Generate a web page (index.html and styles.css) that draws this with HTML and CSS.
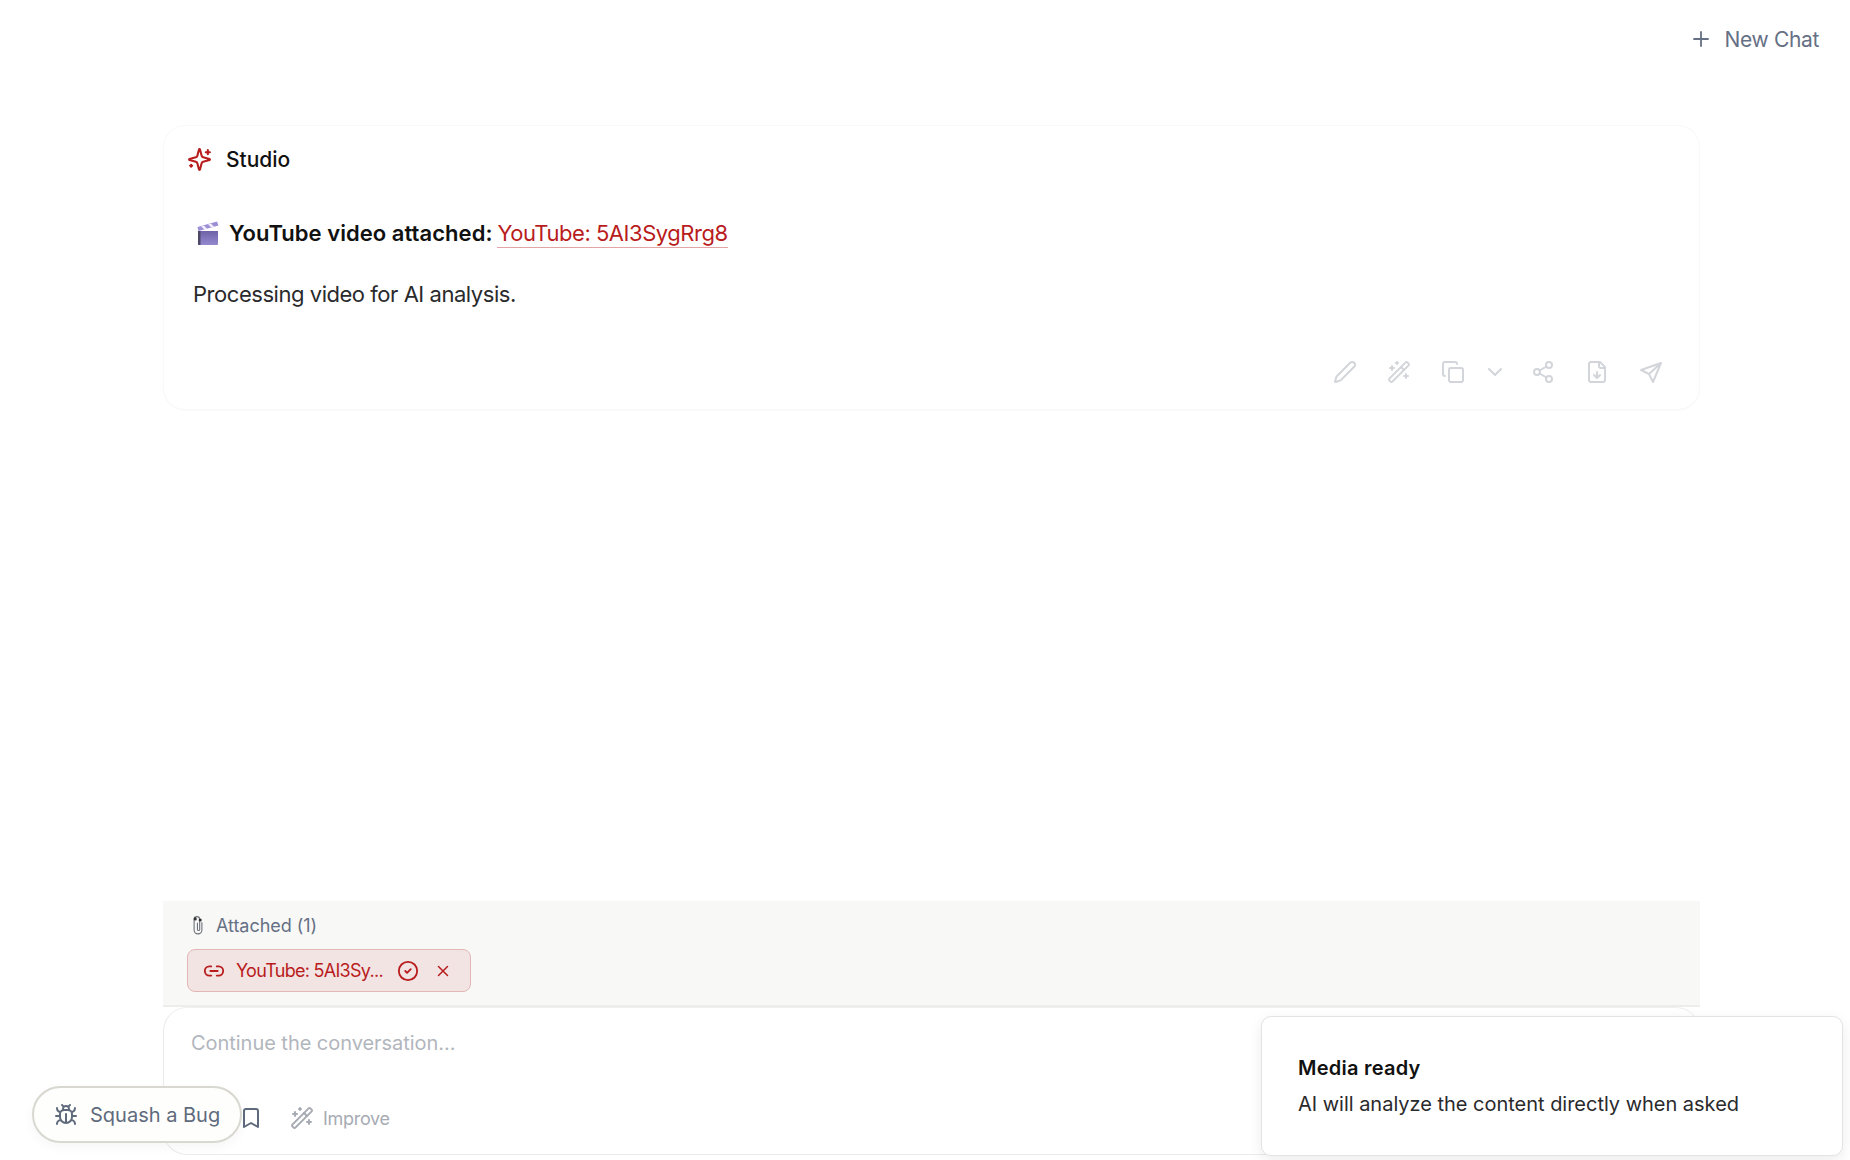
FILE: index.html
```html
<!DOCTYPE html>
<html lang="en">
<head>
<meta charset="utf-8">
<title>Studio</title>
<link rel="stylesheet" href="styles.css">
</head>
<body>
<div class="app">
  <header class="top">
    <button class="new-chat">
      <svg class="ic ic-plus" viewBox="0 0 24 24"><path d="M5 12h14M12 5v14"/></svg>
      <span>New Chat</span>
    </button>
  </header>

  <main class="thread">
    <article class="card">
      <div class="who">
        <svg class="ic ic-spark" viewBox="0 0 24 24"><path d="M9.937 15.5A2 2 0 0 0 8.5 14.063l-6.135-1.582a.5.5 0 0 1 0-.962L8.5 9.936A2 2 0 0 0 9.937 8.5l1.582-6.135a.5.5 0 0 1 .963 0L14.063 8.5A2 2 0 0 0 15.5 9.937l6.135 1.581a.5.5 0 0 1 0 .964L15.5 14.063a2 2 0 0 0-1.437 1.437l-1.582 6.135a.5.5 0 0 1-.963 0z"/><path d="M20 3v4M22 5h-4M4 17v2M5 18H3"/></svg>
        <span class="who-name">Studio</span>
      </div>
      <p class="lead">
        <svg class="clapper" viewBox="0 0 22 24">
          <defs><linearGradient id="clapBody" x1="0" y1="0" x2="0" y2="1"><stop offset="0" stop-color="#6f63a8"/><stop offset="1" stop-color="#9488cf"/></linearGradient></defs>
          <path fill="url(#clapBody)" d="M1 10h20v13a1 1 0 0 1-1 1H2a1 1 0 0 1-1-1z"/>
          <path fill="#4c4866" d="M1 10h2.500v14H2a1 1 0 0 1-1-1z"/>
          <path fill="#9d8fd6" d="M.5 6 20 .5l1.500 4L1.500 10z"/>
          <path fill="#f1edfb" d="m4 5.200 3.200 3.400 3-.7-3.200-3.500zm7-2 3.200 3.400 3-.7L14 2.400z"/>
        </svg>
        <strong>YouTube video attached:</strong><a class="link" href="#">YouTube: 5AI3SygRrg8</a>
      </p>
      <p class="body-text">Processing video for AI analysis.</p>
      <div class="actions">
        <svg class="ic act" viewBox="0 0 24 24"><path d="M21.174 6.812a1 1 0 0 0-3.986-3.987L3.842 16.174a2 2 0 0 0-.5.83l-1.321 4.352a.5.5 0 0 0 .623.622l4.353-1.32a2 2 0 0 0 .83-.497z"/></svg>
        <svg class="ic act" viewBox="0 0 24 24"><path d="m21.640 3.640-1.280-1.280a1.210 1.210 0 0 0-1.720 0L2.360 18.640a1.210 1.210 0 0 0 0 1.720l1.280 1.280a1.200 1.200 0 0 0 1.720 0L21.640 5.360a1.200 1.200 0 0 0 0-1.720"/><path d="m14 7 3 3M5 6v4M19 14v4M10 2v2M7 8H3M21 16h-4M11 3H9"/></svg>
        <svg class="ic act" viewBox="0 0 24 24"><rect x="8" y="8" width="14" height="14" rx="2"/><path d="M4 16c-1.100 0-2-.9-2-2V4c0-1.100.9-2 2-2h10c1.100 0 2 .9 2 2"/></svg>
        <svg class="ic act-chev" viewBox="0 0 24 24"><path d="m6 9 6 6 6-6"/></svg>
        <svg class="ic act" viewBox="0 0 24 24"><circle cx="18" cy="5" r="3"/><circle cx="6" cy="12" r="3"/><circle cx="18" cy="19" r="3"/><path d="m8.590 13.510 6.830 3.980M15.410 6.510l-6.820 3.980"/></svg>
        <svg class="ic act" viewBox="0 0 24 24"><path d="M15 2H6a2 2 0 0 0-2 2v16a2 2 0 0 0 2 2h12a2 2 0 0 0 2-2V7Z"/><path d="M14 2v4a2 2 0 0 0 2 2h4M12 18v-6M9 15l3 3 3-3"/></svg>
        <svg class="ic act" viewBox="0 0 24 24"><path d="M22 3 2 10l8 4 4 8zM22 3 10 14"/></svg>
      </div>
    </article>
  </main>

  <section class="composer">
    <div class="attached">
      <div class="attached-label">
        <svg class="clip" viewBox="0 0 12 18"><path d="M9.500 6.500v7a3.500 3.500 0 0 1-7 0V4a2.500 2.500 0 0 1 5 0v9a1 1 0 0 1-2 0V7"/><circle class="clip-eye" cx="3.500" cy="3.500" r="1.400"/><circle class="clip-eye" cx="8" cy="4.500" r="1.400"/></svg>
        <span>Attached (1)</span>
      </div>
      <div class="chip">
        <svg class="ic chip-link" viewBox="0 0 24 24"><path d="M9 17H7A5 5 0 0 1 7 7h2M15 7h2a5 5 0 1 1 0 10h-2M8 12h8"/></svg>
        <span class="chip-name">YouTube: 5AI3Sy...</span>
        <svg class="ic chip-check" viewBox="0 0 24 24"><circle cx="12" cy="12" r="10"/><path d="m9 12 2 2 4-4"/></svg>
        <svg class="ic chip-x" viewBox="0 0 24 24"><path d="M18 6 6 18M6 6l12 12"/></svg>
      </div>
    </div>
    <div class="input-card">
      <div class="placeholder">Continue the conversation...</div>
      <div class="tools">
        <svg class="ic tool-mark" viewBox="0 0 24 24"><path d="m19 21-7-4-7 4V5a2 2 0 0 1 2-2h10a2 2 0 0 1 2 2v16z"/></svg>
        <svg class="ic tool-wand" viewBox="0 0 24 24"><path d="m21.640 3.640-1.280-1.280a1.210 1.210 0 0 0-1.720 0L2.360 18.640a1.210 1.210 0 0 0 0 1.720l1.280 1.280a1.200 1.200 0 0 0 1.720 0L21.640 5.360a1.200 1.200 0 0 0 0-1.720"/><path d="m14 7 3 3M5 6v4M19 14v4M10 2v2M7 8H3M21 16h-4M11 3H9"/></svg>
        <span class="tool-label">Improve</span>
      </div>
    </div>
  </section>

  <button class="bug">
    <svg class="ic bug-ic" viewBox="0 0 24 24"><path d="m8 2 1.880 1.880M14.120 3.880 16 2M9 7.130v-1a3.003 3.003 0 1 1 6 0v1"/><path d="M12 20c-3.300 0-6-2.700-6-6v-3a4 4 0 0 1 4-4h4a4 4 0 0 1 4 4v3c0 3.300-2.700 6-6 6M12 20v-9M6.530 9C4.600 8.800 3 7.100 3 5M6 13H2M3 21c0-2.100 1.700-3.900 3.800-4M20.970 5c0 2.100-1.600 3.800-3.500 4M22 13h-4M17.200 17c2.100.1 3.800 1.900 3.800 4"/></svg>
    <span>Squash a Bug</span>
  </button>

  <aside class="toast">
    <div class="toast-title">Media ready</div>
    <div class="toast-text">AI will analyze the content directly when asked</div>
  </aside>
</div>
</body>
</html>
```

FILE: styles.css
```css
* { box-sizing: border-box; }
html, body { margin: 0; padding: 0; background: #fff; }
body { font-family: Inter, "Noto Sans", sans-serif; color: #1c1c1e; }
p { margin: 0; }
button { font: inherit; background: none; border: 0; padding: 0; }

.app { position: relative; width: 1850px; height: 1160px; overflow: hidden; display: flex; flex-direction: column; }
.ic { fill: none; stroke: currentColor; stroke-width: 2; stroke-linecap: round; stroke-linejoin: round; display: block; flex: none; }

.top { height: 125px; flex: none; display: flex; justify-content: flex-end; padding: 27px 31px 0 0; }
.new-chat { display: flex; align-items: center; gap: 12px; height: 24px; color: #667085; font-size: 21px; letter-spacing: -0.35px; }
.ic-plus { width: 24px; height: 24px; stroke-width: 1.8; }

.thread { flex: 1; padding-left: 163px; padding-right: 150px; min-height: 0; }
.card { height: 285px; border: 1px solid #f8f8f8; border-radius: 22px; padding: 19px 24px 0 23px; box-shadow: 0 1px 2px rgba(0,0,0,.02); display: flex; flex-direction: column; }
.who { display: flex; align-items: center; gap: 14px; height: 28px; }
.ic-spark { width: 25px; height: 25px; color: #b91c1c; stroke-width: 2; }
.who-name { font-size: 21px; font-weight: 500; color: #111; }
.lead { display: flex; align-items: center; margin: 43px 0 0 10px; height: 34px; font-size: 22px; color: #111; white-space: pre; }
.clapper { width: 22px; height: 24px; margin-right: 10px; flex: none; }
.lead strong { font-weight: 600; letter-spacing: 0.04px; }
.link { color: #b91c1c; text-decoration: none; border-bottom: 1px solid #e2a4a4; line-height: 28px; margin-left: 5px; letter-spacing: -0.47px; }
.body-text { margin: 27px 0 0 6px; font-size: 22px; line-height: 34px; letter-spacing: -0.46px; color: #2a2a2c; }
.actions { margin-top: 49px; display: flex; align-items: center; justify-content: flex-end; padding-right: 12px; color: #d2d5da; }
.act { width: 24px; height: 24px; margin-left: 30px; }
.act-chev { width: 24px; height: 24px; margin-left: 18px; margin-right: -6px; }

.composer { flex: none; margin: 0 150px 5px 163px; }
.attached { height: 106px; background: #f8f8f6; border-bottom: 2px solid #ededec; padding: 12px 0 0 24px; }
.attached-label { display: flex; align-items: center; gap: 11px; height: 24px; font-size: 18px; color: #667085; padding-left: 4px; letter-spacing: -0.05px; }
.clip { width: 14px; height: 20px; fill: none; stroke: #6d727b; stroke-width: 1; }
.clip-eye { fill: #333; stroke: none; }
.chip { margin-top: 12px; width: 284px; height: 43px; display: flex; align-items: center; background: #f3e4e4; border: 1px solid #e5b6b6; border-radius: 8px; color: #b91c1c; padding-left: 15px; font-size: 18px; letter-spacing: -0.72px; }
.chip-link { width: 22px; height: 22px; }
.chip-name { margin-left: 11px; width: 147px; white-space: nowrap; }
.chip-check { width: 22px; height: 22px; margin-left: 14px; }
.chip-x { width: 18px; height: 18px; margin-left: 15px; }

.input-card { height: 148px; border: 1px solid #ebebeb; border-top-color: #f0f0f0; border-radius: 24px; padding: 20px 0 0 27px; display: flex; flex-direction: column; }
.placeholder { font-size: 20px; line-height: 30px; color: #b2b6bd; letter-spacing: -0.04px; }
.tools { margin-top: 48px; display: flex; align-items: center; color: #a7abb3; padding-left: 48px; }
.tool-mark { width: 24px; height: 24px; color: #5f6b7d; }
.tool-wand { width: 24px; height: 24px; margin-left: 27px; }
.tool-label { margin-left: 9px; font-size: 18px; letter-spacing: -0.3px; }

.bug { position: absolute; left: 32px; top: 1086px; width: 210px; height: 57px; border: 2px solid #d8d7d0; border-radius: 29px; background: #fefefc; color: #5f6b7d; display: flex; align-items: center; gap: 12px; padding-left: 20px; font-size: 20px; box-shadow: 0 4px 12px rgba(0,0,0,.04); }
.bug-ic { width: 24px; height: 24px; }

.toast { position: absolute; left: 1261px; top: 1016px; width: 582px; height: 140px; background: #fff; border: 1px solid #e3e3e3; border-radius: 10px; box-shadow: 0 4px 14px rgba(0,0,0,.08); padding: 36px 0 0 36px; }
.toast-title { font-size: 20px; line-height: 30px; font-weight: 600; color: #111; letter-spacing: 0.24px; }
.toast-text { margin-top: 6px; font-size: 20px; line-height: 30px; color: #2a2a2c; letter-spacing: -0.02px; }
```
